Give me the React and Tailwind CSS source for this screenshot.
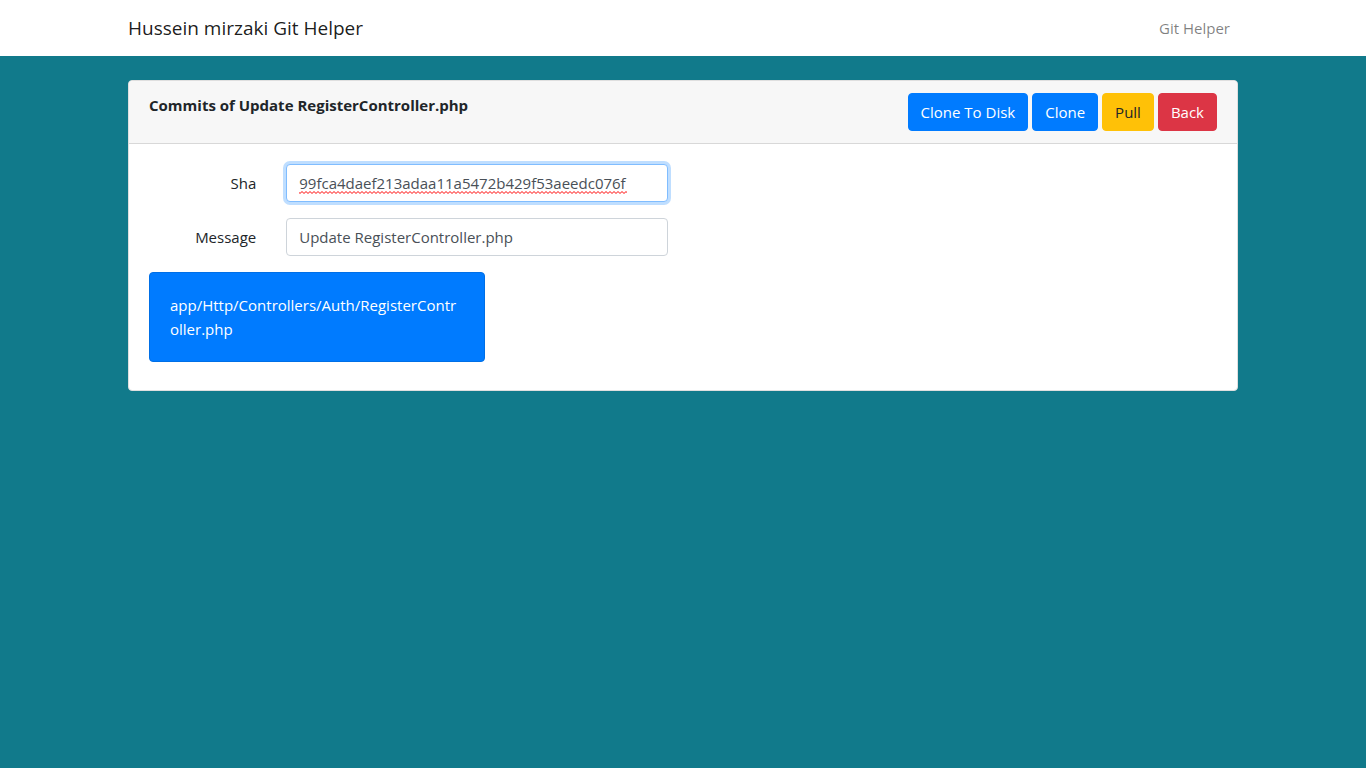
import React from 'react';

const control =
  'block h-[38px] w-full rounded-sm border border-[#ced4da] bg-white px-3 text-[15px] leading-6 text-[#495057] outline-none focus:border-[#80bdff] focus:ring-3 focus:ring-[#bfdeff]';

const button =
  'h-[38px] rounded-sm border px-3 text-center text-[15px] leading-6 whitespace-nowrap';

function Field({ id, label, children }) {
  return (
    <div className="mb-4 flex flex-col md:flex-row">
      <label htmlFor={id} className="px-[15px] py-[7px] text-[15px] leading-6 md:w-1/4 md:text-right">
        {label}
      </label>
      <div className="px-[15px] md:w-3/4">{children}</div>
    </div>
  );
}

export default function App() {
  return (
    <div className="min-h-screen bg-[#117a8b] font-['Open_Sans','Noto_Sans',sans-serif] text-[#212529]">
      <nav className="bg-white">
        <div className="mx-auto flex h-14 max-w-[1140px] items-center justify-between px-[15px]">
          <a href="#" className="text-[19px] leading-7 text-black/90">
            Hussein mirzaki Git Helper
          </a>
          <a href="#" className="px-2 text-[15px] leading-6 text-black/50">
            Git Helper
          </a>
        </div>
      </nav>

      <main className="mx-auto max-w-[1140px] px-[15px] py-6">
        <section className="rounded-sm border border-[#dfdfdf] bg-white">
          <header className="flex flex-wrap items-start justify-between gap-2 rounded-t-sm border-b border-[#d8d8d8] bg-[#f7f7f7] px-5 py-3">
            <h1 className="text-[15px] leading-6 font-bold">Commits of Update RegisterController.php</h1>
            <div className="flex flex-wrap gap-1">
              <button type="button" className={`${button} border-[#007bff] bg-[#007bff] text-white`}>
                Clone To Disk
              </button>
              <button type="button" className={`${button} border-[#007bff] bg-[#007bff] text-white`}>
                Clone
              </button>
              <button type="button" className={`${button} border-[#ffc107] bg-[#ffc107] text-[#212529]`}>
                Pull
              </button>
              <button type="button" className={`${button} border-[#dc3545] bg-[#dc3545] text-white`}>
                Back
              </button>
            </div>
          </header>

          <div className="p-5">
            <div className="-mx-[15px]">
              <form className="md:w-1/2">
                <Field id="sha" label="Sha">
                  <div className="relative">
                    <input
                      id="sha"
                      type="text"
                      autoFocus
                      spellCheck={false}
                      defaultValue="99fca4daef213adaa11a5472b429f53aeedc076f"
                      className={`${control} caret-transparent`}
                    />
                    <svg
                      aria-hidden="true"
                      width="328"
                      height="3"
                      className="pointer-events-none absolute bottom-2 left-[13px]"
                    >
                      <defs>
                        <pattern id="squiggle" width="4" height="3" patternUnits="userSpaceOnUse">
                          <path d="M-1 .5 1 2.5 3 .5 5 2.5" fill="none" stroke="#ff0000" strokeWidth="1" />
                        </pattern>
                      </defs>
                      <rect width="328" height="3" fill="url(#squiggle)" />
                    </svg>
                  </div>
                </Field>
                <Field id="message" label="Message">
                  <input
                    id="message"
                    type="text"
                    defaultValue="Update RegisterController.php"
                    className={control}
                  />
                </Field>
              </form>
              <div className="flex flex-wrap">
                <div className="w-full px-[15px] md:w-1/3">
                  <a
                    href="#"
                    className="mb-2 block rounded-sm border border-[#006fe6] bg-[#007bff] p-5 text-[15px] leading-6 break-all text-white"
                  >
                    app/Http/Controllers/Auth/RegisterController.php
                  </a>
                </div>
              </div>
            </div>
          </div>
        </section>
      </main>
    </div>
  );
}
